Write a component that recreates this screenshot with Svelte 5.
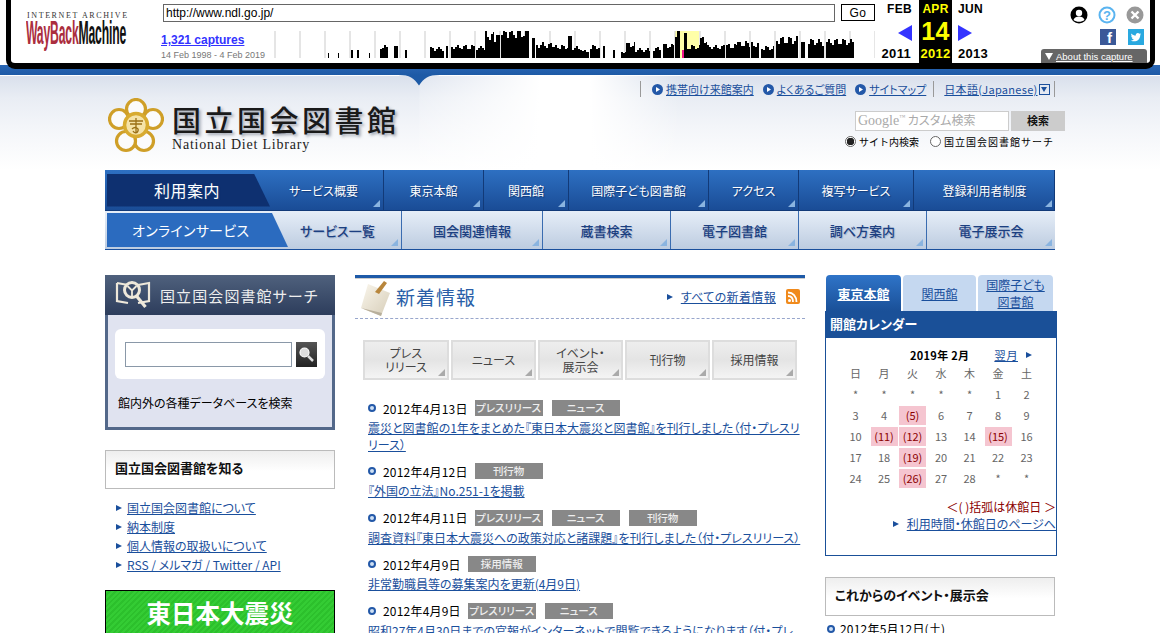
<script>
  // capture histogram, segments are [x, width, height] in page px
  const segs = [
    [328,1,5],[338,1,5],[351,2,8],[357,2,8],[369,1,5],[380,8,11],[394,4,12],[405,2,8],
    [430,14,9],[446,2,12],[451,24,11],[476,9,10],[485,9,22],[494,6,20],[501,28,25],[532,3,20],
    [536,19,13],[555,13,11],[568,4,22],[572,10,10],[582,7,7],[590,10,11],[603,2,12],[613,2,8],
    [621,5,6],[626,9,13],[635,15,8],[653,8,9],[663,11,12],[675,5,25],[684,3,25],[687,13,11],
    [700,7,18],[707,18,11],[726,11,12],[737,13,14],[751,8,13],[761,13,10],[776,22,18],[801,4,16],
    [808,16,16],[826,28,16]
  ];
  const bars = [];
  for (const [x, w, h] of segs) {
    for (let i = 0; i < w; i += 2) {
      const j = w > 4 ? Math.round(Math.sin(x * 1.7 + i * 2.3) * h * 0.22) : 0;
      bars.push({ x: x + i, w: Math.min(2, w - i), h: h + j });
    }
  }
  const years = Array.from({ length: 25 }, (_, i) => 274.5 + i * 25);

  const topLinks = ["携帯向け来館案内", "よくあるご質問", "サイトマップ"];
  const nav1 = ["サービス概要", "東京本館", "関西館", "国際子ども図書館", "アクセス", "複写サービス", "登録利用者制度"];
  const nav2 = ["サービス一覧", "国会関連情報", "蔵書検索", "電子図書館", "調べ方案内", "電子展示会"];
  const knowLinks = ["国立国会図書館について", "納本制度", "個人情報の取扱いについて", "RSS / メルマガ / Twitter / API"];
  const tabs = [["プレス", "リリース"], ["ニュース"], ["イベント・", "展示会"], ["刊行物"], ["採用情報"]];
  const news = [
    { date: "2012年4月13日", tags: ["プレスリリース", "ニュース"], text: "震災と図書館の1年をまとめた『東日本大震災と図書館』を刊行しました（付・プレスリリース）" },
    { date: "2012年4月12日", tags: ["刊行物"], text: "『外国の立法』No.251-1を掲載" },
    { date: "2012年4月11日", tags: ["プレスリリース", "ニュース", "刊行物"], text: "調査資料『東日本大震災への政策対応と諸課題』を刊行しました（付・プレスリリース）" },
    { date: "2012年4月9日", tags: ["採用情報"], text: "非常勤職員等の募集案内を更新(4月9日)" },
    { date: "2012年4月9日", tags: ["プレスリリース", "ニュース"], text: "昭和27年4月30日までの官報がインターネットで閲覧できるようになります（付・プレス" }
  ];
  const weekdays = ["日", "月", "火", "水", "木", "金", "土"];
  const days = ["*","*","*","*","*","1","2","3","4","(5)","6","7","8","9","10","(11)","(12)","13","14","(15)","16","17","18","(19)","20","21","22","23","24","25","(26)","27","28","*","*"];
</script>

<div class="page">
  <div class="toolbar">
    <div class="wb-logo">
      <div class="ia">INTERNET ARCHIVE</div>
      <div class="wbm"><span class="way">WayBack</span><span class="mach">Machine</span></div>
    </div>
    <div class="wb-mid">
      <div class="url-row">
        <input class="url" value="http://www.ndl.go.jp/" />
        <button class="go">Go</button>
      </div>
      <div class="hist-row">
        <div class="caps">
          <a href="#caps">1,321 captures</a>
          <div class="range">14 Feb 1998 - 4 Feb 2019</div>
        </div>
        <svg class="hist" width="601" height="27" viewBox="274 35 601 27">
          <rect x="675" y="35" width="24" height="27" fill="#ffffa8" />
          {#each years as y}
            <rect x={y} y="35" width="1" height="27" fill="#ccc" />
          {/each}
          {#each bars as b}
            <rect x={b.x} y={62 - b.h} width={b.w} height={b.h} fill="#000" />
          {/each}
          <rect x="682" y="54" width="2" height="8" fill="#f0148c" />
        </svg>
      </div>
    </div>
    <div class="wb-cal">
      <div class="c-prev">
        <b>FEB</b>
        <svg width="14" height="16" viewBox="0 0 14 16"><path d="M14 0V16L0 8Z" fill="#3333ff" /></svg>
        <b class="yr">2011</b>
      </div>
      <div class="c-cur">
        <b>APR</b>
        <b class="day">14</b>
        <b class="yr">2012</b>
      </div>
      <div class="c-next">
        <b>JUN</b>
        <svg width="14" height="16" viewBox="0 0 14 16"><path d="M0 0V16L14 8Z" fill="#3333ff" /></svg>
        <b class="yr">2013</b>
      </div>
    </div>
    <div class="wb-icons">
      <div class="ico-row">
        <svg width="18" height="18" viewBox="0 0 18 18"><circle cx="9" cy="9" r="8.5" fill="#000" /><circle cx="9" cy="7" r="3.2" fill="#fff" /><path d="M3.5 14c1-3 3-3.6 5.5-3.6s4.500.6 5.500 3.600c-3 2.400-8 2.400-11 0z" fill="#fff" /></svg>
        <svg width="18" height="18" viewBox="0 0 18 18"><circle cx="9" cy="9" r="7.500" fill="none" stroke="#5ab4f0" stroke-width="2" /><text x="9" y="13.500" text-anchor="middle" class="qm">?</text></svg>
        <svg width="18" height="18" viewBox="0 0 18 18"><circle cx="9" cy="9" r="8.500" fill="#999" /><path d="M5.500 5.500l7 7m0-7l-7 7" stroke="#fff" stroke-width="2.400" /></svg>
      </div>
      <div class="ico-row social">
        <div class="fb">f</div>
        <svg width="16" height="16" viewBox="0 0 16 16"><rect width="16" height="16" fill="#2aa9e0" /><path d="M13 5c-.4.2-.8.3-1.200.4.400-.3.800-.7.900-1.200-.4.200-.9.400-1.300.5a2.100 2.100 0 0 0-3.600 1.900C6 6.500 4.500 5.700 3.500 4.400c-.6 1-.3 2.200.6 2.800-.3 0-.6-.1-.9-.3 0 1 .7 1.900 1.700 2.100-.3.100-.6.100-1 0 .3.800 1 1.400 2 1.500-.9.700-2 1-3.100.9 3.900 2.400 9.500.3 9.500-5.600.3-.2.500-.5.700-.8z" fill="#fff" /></svg>
      </div>
      <div class="about"><span class="tri"></span><a href="#about">About this capture</a></div>
    </div>
  </div>
  <div class="blueband"></div>

  <header class="hdr">
    <svg class="notch" width="60" height="11" viewBox="0 0 60 11"><path d="M0 0C12 0 16 3 21 10.500C26 3 30 0 42 0Z" fill="#1d5aa6" /></svg>
    <div class="brand">
      <svg class="emblem" width="56" height="56" viewBox="0 0 56 56">
        <g fill="#fbfbfb" stroke="#cf9f28" stroke-width="3.200">
          <circle cx="28" cy="11" r="9.500" />
          <circle cx="45" cy="21" r="9.500" />
          <circle cx="36" cy="43" r="9.500" />
          <circle cx="18" cy="43" r="9.500" />
          <circle cx="11" cy="21" r="9.500" />
        </g>
        <circle cx="28" cy="27" r="11.500" fill="#f5e3a8" stroke="#d8ab30" stroke-width="3.500" />
        <path d="M21 23h14M22 26h12M28 20v15M24 31c3-3 7-1 6 2s-4 2-5 0" fill="none" stroke="#9a7016" stroke-width="1.300" />
      </svg>
      <div class="brand-txt">
        <div class="jp">国立国会図書館</div>
        <div class="en">National Diet Library</div>
      </div>
    </div>
    <div class="hdr-right">
      <div class="toplinks">
        {#each topLinks as l}
          <span class="tl">
            <svg width="11" height="11" viewBox="0 0 11 11"><circle cx="5.500" cy="5.500" r="5.500" fill="#2358a8" /><path d="M4 3l4 2.500L4 8z" fill="#fff" /></svg>
            <a href="#top">{l}</a>
          </span>
        {/each}
        <span class="lang"><a href="#lang">日本語(Japanese)</a><span class="dd"></span></span>
      </div>
      <div class="search">
        <div class="s-box"><span class="g">Google<sup>™</sup></span> カスタム検索</div>
        <div class="s-btn">検索</div>
      </div>
      <div class="radios">
        <span class="rd on"></span><span class="rl">サイト内検索</span>
        <span class="rd"></span><span class="rl wide">国立国会図書館サーチ</span>
      </div>
    </div>
  </header>

  <nav class="nav">
    <div class="row1">
      <div class="n1 first">
        <div class="slant">利用案内</div>
        <span class="n1-lab">{nav1[0]}</span>
      </div>
      {#each nav1.slice(1) as n}
        <div class="n1"><span class="n1-lab">{n}</span></div>
      {/each}
    </div>
    <div class="row2">
      <div class="n2 first">
        <div class="slant2">オンラインサービス</div>
        <span class="n2-lab">{nav2[0]}</span>
      </div>
      {#each nav2.slice(1) as n}
        <div class="n2"><span class="n2-lab">{n}</span></div>
      {/each}
    </div>
  </nav>

  <main class="main">
    <aside class="left">
      <section class="ss">
        <div class="ss-head">
          <svg width="36" height="30" viewBox="0 0 36 30">
            <path d="M2 3l11 2M23 5l11-2v18l-11 2M13 23L2 21V3" fill="none" stroke="#eee8da" stroke-width="2.200" />
            <circle cx="17" cy="10" r="7.500" fill="#3a4a68" stroke="#eee8da" stroke-width="3" />
            <path d="M21.500 16l9 11" stroke="#eee8da" stroke-width="3.200" />
            <path d="M12.500 6l4.500 4.500L21.500 6M17 10.500V16" stroke="#eee8da" stroke-width="1.800" fill="none" />
          </svg>
          <span>国立国会図書館サーチ</span>
        </div>
        <div class="ss-body">
          <div class="ss-form">
            <input class="ss-input" />
            <div class="ss-btn">
              <svg width="17" height="17" viewBox="0 0 17 17"><circle cx="6.500" cy="6.500" r="4.500" fill="#ddd" stroke="#fff" stroke-width="1.200" /><path d="M10 10l5 5" stroke="#ddd" stroke-width="2.500" /></svg>
            </div>
          </div>
          <p>館内外の各種データベースを検索</p>
        </div>
      </section>

      <h2 class="boxh know">国立国会図書館を知る</h2>
      <ul class="klinks">
        {#each knowLinks as k}
          <li><span class="arr"></span><a href="#k">{k}</a></li>
        {/each}
      </ul>

      <div class="green">
        <div>東日本大震災</div>
        <div>関連情報</div>
      </div>
    </aside>

    <section class="center">
      <div class="news-head">
        <svg width="32" height="38" viewBox="0 0 32 38">
          <defs><linearGradient id="sheet" x1="0" y1="0" x2="1" y2="1"><stop offset="0" stop-color="#faf6ec" /><stop offset="1" stop-color="#d6cdb8" /></linearGradient></defs>
          <path d="M8 5L30 14 21 37 1 29Z" fill="url(#sheet)" />
          <path d="M1 29L21 37 22 34Z" fill="#b8af9c" />
          <path d="M15 13L24 2l3 2-8 11z" fill="#b8863c" />
        </svg>
        <h2>新着情報</h2>
        <span class="arr all"></span><a class="alllink" href="#all">すべての新着情報</a>
        <svg class="rss" width="14" height="15" viewBox="0 0 14 15">
          <rect width="14" height="15" rx="2" fill="#f08a1c" />
          <circle cx="3.500" cy="11.500" r="1.500" fill="#fff" />
          <path d="M2 7c3 0 5 2 5 6M2 3.500c5 0 8.500 4 8.500 9.500" fill="none" stroke="#fff" stroke-width="1.800" />
        </svg>
      </div>

      <div class="cats">
        {#each tabs as t}
          <div class="cat">
            {#each t as line}<span>{line}</span>{/each}
          </div>
        {/each}
      </div>

      {#each news as n}
        <article class="item">
          <div class="meta">
            <span class="dot"></span>
            <span class="date">{n.date}</span>
            {#each n.tags as t}<span class="tag">{t}</span>{/each}
          </div>
          <a class="nlink" href="#n">{n.text}</a>
        </article>
      {/each}
    </section>

    <aside class="right">
      <div class="rtabs">
        <div class="rtab on"><a href="#t">東京本館</a></div>
        <div class="rtab"><a href="#t">関西館</a></div>
        <div class="rtab small"><a href="#t">国際子ども<br />図書館</a></div>
      </div>
      <div class="cal">
        <div class="cal-head">開館カレンダー</div>
        <div class="cal-cap">
          <b>2019年 2月</b>
          <a href="#m">翌月</a>
          <span class="arr"></span>
        </div>
        <div class="grid">
          {#each weekdays as w}<div class="wd">{w}</div>{/each}
          {#each days as d}
            <div class="d" class:closed={d.startsWith("(")}>{d}</div>
          {/each}
        </div>
        <div class="note">＜( )括弧は休館日 ＞</div>
        <div class="hours"><span class="arr"></span><a href="#h">利用時間・休館日のページへ</a></div>
      </div>
      <h2 class="boxh events">これからのイベント・展示会</h2>
      <div class="ev"><span class="dot"></span>2012年5月12日(土)</div>
    </aside>
  </main>
</div>

<style>
  :global(body) {
    margin: 0;
    background: #fff;
    overflow: hidden;
  }
  .page {
    width: 1160px;
    height: 633px;
    overflow: hidden;
    font-family: "Noto Sans CJK JP", sans-serif;
    font-feature-settings: "palt";
    font-size: 12px;
    color: #000;
  }
  a { color: #1a4f9c; }

  /* wayback bar */
  .toolbar {
    position: relative;
    z-index: 2;
    box-sizing: border-box;
    width: 1149px;
    height: 69px;
    margin-left: 6px;
    margin-bottom: -4px;
    display: flex;
    background: #fff;
    border: solid #000;
    border-width: 0 5px 6px;
    border-radius: 0 0 9px 9px;
    font-family: "Liberation Sans", sans-serif;
    font-feature-settings: normal;
  }
  .blueband {
    height: 10px;
    background: linear-gradient(#2a66b4, #1d5aa6);
  }
  .wb-logo {
    width: 150px;
    flex: none;
    padding: 11px 0 0 15px;
    box-sizing: border-box;
  }
  .ia {
    font: 8px/9px "Liberation Serif", serif;
    letter-spacing: 1.600px;
    color: #333;
    padding-left: 1px;
    white-space: nowrap;
  }
  .wbm {
    display: inline-block;
    font: bold 21px/16px "Liberation Sans", sans-serif;
    transform: scale(0.58, 1.550);
    transform-origin: 0 0;
    white-space: nowrap;
    margin-top: 1px;
    letter-spacing: -0.300px;
  }
  .way { color: #ab2e3e; }
  .mach { color: #111; }
  .wb-mid { width: 714px; flex: none; }
  .url-row {
    display: flex;
    align-items: flex-start;
    padding: 4px 0 0 2px;
    height: 31px;
    box-sizing: border-box;
  }
  .url {
    width: 673px;
    height: 18px;
    box-sizing: border-box;
    border: 1px solid #666;
    padding: 0 2px;
    font: 12px "Liberation Sans", sans-serif;
    outline: none;
  }
  .go {
    width: 34px;
    height: 17px;
    margin-left: 6px;
    padding: 0;
    border: 1px solid #000;
    background: #fff;
    font: 12px "Liberation Sans", sans-serif;
    letter-spacing: 0.500px;
  }
  .hist-row { display: flex; }
  .caps { width: 113px; flex: none; }
  .caps a {
    display: block;
    font: bold 12px/14px "Liberation Sans", sans-serif;
    color: #3333ff;
    margin-top: 2px;
  }
  .range {
    font: 9px/12px "Liberation Sans", sans-serif;
    color: #777;
    margin-top: 2px;
    white-space: nowrap;
  }
  .hist { display: block; flex: none; }
  .wb-cal {
    flex: none;
    display: grid;
    grid-template-columns: 44px 33px 40px;
    height: 63px;
  }
  .wb-cal b { font-size: 12px; line-height: 14px; letter-spacing: 0.300px; }
  .c-prev, .c-cur, .c-next {
    display: flex;
    flex-direction: column;
    align-items: center;
    padding-top: 2px;
    box-sizing: border-box;
  }
  .c-prev { align-items: flex-end; padding-right: 7px; }
  .c-next { align-items: flex-start; padding-left: 6px; }
  .c-prev svg, .c-next svg { margin: 9px 0 6px; }
  .c-prev .yr { margin-right: 1px; }
  .c-cur { background: #000; color: #ff0; }
  .c-cur .day { font-size: 25px; line-height: 31px; margin-bottom: 0; }
  .yr { font-size: 13px !important; }
  .wb-icons {
    flex: 1;
    position: relative;
    display: flex;
    flex-direction: column;
    align-items: flex-end;
    padding: 6px 6px 0 0;
    box-sizing: border-box;
  }
  .ico-row { display: flex; gap: 10px; }
  .qm { font: bold 13px "Liberation Sans", sans-serif; fill: #5ab4f0; }
  .social { margin-top: 5px; gap: 12px; padding-left: 0; }
  .fb {
    width: 16px;
    height: 16px;
    background: #3b5998;
    color: #fff;
    font: bold 15px/18px "Liberation Sans", sans-serif;
    text-align: right;
    padding-right: 4px;
    box-sizing: border-box;
    overflow: hidden;
  }
  .about {
    position: absolute;
    right: 3px;
    bottom: 0;
    width: 106px;
    height: 14px;
    box-sizing: border-box;
    background: #666;
    border-radius: 3px 3px 0 0;
    color: #fff;
    display: flex;
    align-items: center;
    padding-left: 4px;
    white-space: nowrap;
  }
  .about a { color: #fff; font-size: 9.500px; margin-left: 3px; }
  .tri {
    width: 0;
    height: 0;
    border: 4.500px solid transparent;
    border-top: 7px solid #fff;
    border-bottom: 0;
  }

  /* site header */
  .hdr {
    position: relative;
    height: 95px;
    display: flex;
    justify-content: space-between;
    border-top: 1px solid #fff;
    box-sizing: border-box;
    background:
      linear-gradient(90deg, rgba(255, 255, 255, 0) 0, rgba(255, 255, 255, 0) 419px, rgba(255, 255, 255, 0.200) 420px, #fff 540px, #fff 590px, rgba(255, 255, 255, 0) 680px),
      linear-gradient(#d9e0ec 0, #e9edf4 22px, #f3f5f9 50px, #fff 94px);
  }
  .notch { position: absolute; left: 398px; top: -1px; }
  .brand {
    display: flex;
    gap: 8px;
    padding: 22px 0 0 108px;
  }
  .brand-txt { padding-top: 6px; }
  .jp {
    font-size: 29px;
    line-height: 30px;
    font-weight: 500;
    color: #1a1a1a;
    letter-spacing: 3.500px;
    font-feature-settings: normal;
    text-shadow: 2px 2px 3px rgba(80, 90, 110, 0.500);
  }
  .en {
    font: 14px/16px "Liberation Serif", serif;
    letter-spacing: 0.800px;
    color: #222;
    margin-top: 3px;
    white-space: nowrap;
  }
  .hdr-right { position: relative; width: 526px; padding-top: 5px; box-sizing: border-box; }
  .toplinks {
    display: flex;
    align-items: center;
    height: 16px;
    margin-left: 6px;
    width: 415px;
    box-sizing: border-box;
    border-left: 1px solid #999;
    border-right: 1px solid #999;
    padding-left: 11px;
    white-space: nowrap;
  }
  .tl { display: inline-flex; align-items: center; gap: 3px; margin-right: 9px; font-size: 11px; }
  .lang { display: inline-flex; align-items: center; margin-left: -2px; padding-left: 10px; border-left: 1px solid #999; height: 16px; font-size: 11px; letter-spacing: 0.300px; }
  .dd {
    width: 11px;
    height: 11px;
    box-sizing: border-box;
    border: 1px solid #1a4f9c;
    position: relative;
    margin-left: 1px;
  }
  .dd::after {
    content: "";
    position: absolute;
    left: 1.500px;
    top: 2px;
    border: 3px solid transparent;
    border-top: 5px solid #1a4f9c;
    border-bottom: 0;
  }
  .search { display: flex; gap: 2px; margin: 14px 0 0 221px; }
  .s-box {
    width: 154px;
    height: 20px;
    box-sizing: border-box;
    border: 1px solid #ccc;
    background: #fff;
    font-size: 12px;
    line-height: 15px;
    color: #aaa;
    padding-left: 2px;
    white-space: nowrap;
  }
  .g { font-family: "Liberation Serif", serif; font-size: 14px; color: #aaa; }
  .g sup { font-size: 6px; line-height: 0; }
  .s-btn {
    width: 54px;
    height: 20px;
    background: #ccc;
    text-align: center;
    font-size: 11px;
    font-weight: 700;
    line-height: 19px;
    color: #111;
  }
  .radios {
    display: flex;
    align-items: center;
    margin: 0 0 0 211px;
    height: 20px;
    white-space: nowrap;
  }
  .rd {
    width: 11px;
    height: 11px;
    box-sizing: border-box;
    border: 1px solid #666;
    border-radius: 50%;
    background: #fff;
    flex: none;
  }
  .rd.on { background: radial-gradient(circle, #222 3.500px, #fff 4px); }
  .rl { font-size: 10px; font-feature-settings: normal; margin: 0 11px 0 3px; }
  .rl.wide { letter-spacing: 1px; }

  /* nav */
  .nav { margin: 0 105px; width: 950px; }
  .row1, .row2 { display: grid; height: 40px; }
  .row1 {
    grid-template-columns: 279px 100px 85px 140px 90px 115px 141px;
    background: linear-gradient(#2e70c2, #1a4c96);
    border-right: 1px solid #123a78;
    box-sizing: border-box;
  }
  .row2 {
    grid-template-columns: 297px 141px 128px 128px 128px 128px;
    background: linear-gradient(#e6eef8, #bdcce0);
    border-top: 1px solid #123a78;
    border-bottom: 1px solid #1a4f9c;
    box-sizing: border-box;
  }
  .n1, .n2 {
    position: relative;
    display: flex;
    align-items: center;
    justify-content: center;
    box-sizing: border-box;
  }
  .n1 { border-right: 1px solid #123a78; color: #fff; font-size: 12px; text-shadow: 1px 1px 1px #123a78; }
  .n1:last-child { border-right: 0; }
  .n2 { border-right: 1px solid #3a6cb0; color: #1c3f80; font-size: 13px; font-weight: 500; text-shadow: 1px 1px 1px #9fb2cf; }
  .n2:last-child { border-right: 0; }
  .n1::after, .n2::after {
    content: "";
    position: absolute;
    right: 3px;
    bottom: 3px;
    width: 0;
    height: 0;
    border-style: solid;
    border-width: 0 0 7px 7px;
    border-color: transparent transparent #8ab4e0;
  }
  .n1.first, .n2.first { justify-content: flex-start; }
  .slant {
    width: 163px;
    height: 33px;
    margin: 0 0 0 2px;
    padding-left: 47px;
    box-sizing: border-box;
    background: #0e3070;
    color: #fff;
    font-size: 16px;
    line-height: 33px;
    letter-spacing: 0.500px;
    clip-path: polygon(0 0, 147px 0, 100% 100%, 0 100%);
    flex: none;
  }
  .n1-lab { white-space: nowrap; }
  .first .n1-lab { margin-left: 19px; }
  .slant2 {
    width: 181px;
    height: 34px;
    margin-left: 2px;
    padding-left: 25px;
    box-sizing: border-box;
    background: #2b6bbf;
    color: #fff;
    font-size: 14px;
    line-height: 34px;
    clip-path: polygon(0 0, 165px 0, 100% 100%, 0 100%);
    flex: none;
    text-shadow: none;
    font-weight: 400;
    letter-spacing: 0.300px;
  }
  .first .n2-lab { margin-left: 12px; }

  /* columns */
  .main {
    display: flex;
    gap: 20px;
    padding: 25px 0 0 105px;
  }
  .left { width: 230px; flex: none; }
  .center { width: 450px; flex: none; }
  .right { width: 232px; flex: none; }

  .ss { border: solid #53688a; border-width: 0 3px 3px; background: #e0e3f0; }
  .ss-head {
    height: 40px;
    margin: 0 -3px;
    display: flex;
    align-items: center;
    gap: 9px;
    padding-left: 10px;
    background: linear-gradient(#4f617d, #2d3d5c);
    color: #eee;
    font-size: 15px;
    letter-spacing: 1.100px;
    white-space: nowrap;
  }
  .ss-body { height: 112px; padding: 14px 7px 0; box-sizing: border-box; }
  .ss-form {
    display: flex;
    gap: 4px;
    align-items: center;
    height: 50px;
    background: #fff;
    border-radius: 6px;
    padding-left: 10px;
  }
  .ss-input {
    width: 167px;
    height: 25px;
    box-sizing: border-box;
    border: 1px solid #8a98a8;
    outline: none;
  }
  .ss-btn {
    width: 21px;
    height: 25px;
    background: linear-gradient(#555, #222);
    display: flex;
    align-items: center;
    justify-content: center;
  }
  .ss-body p { margin: 15px 0 0 3px; font-size: 12px; line-height: 18px; white-space: nowrap; }

  .boxh {
    margin: 0;
    height: 39px;
    box-sizing: border-box;
    border: 1px solid #bbb;
    padding-left: 9px;
    background: linear-gradient(#eee, #fff 55%);
    font-size: 13px;
    font-weight: 700;
    line-height: 34px;
    color: #111;
  }
  .know { margin-top: 20px; }
  .klinks { list-style: none; margin: 9px 0 0; padding: 0 0 0 11px; }
  .klinks li { display: flex; align-items: center; height: 19px; font-size: 12px; }
  .arr {
    display: inline-block;
    flex: none;
    width: 0;
    height: 0;
    border-style: solid;
    border-width: 3.500px 0 3.500px 6px;
    border-color: transparent transparent transparent #1a4f9c;
  }
  .klinks .arr { margin-right: 5px; }
  .green {
    box-sizing: border-box;
    height: 90px;
    margin-top: 16px;
    border: 1px solid #000;
    background: repeating-linear-gradient(135deg, #34cc34 0 2px, #2cc02c 2px 4px);
    color: #fff;
    font-size: 24.500px;
    font-weight: 700;
    line-height: 34px;
    text-align: center;
    font-feature-settings: normal;
    padding-top: 5px;
  }

  .news-head {
    display: flex;
    align-items: center;
    height: 44px;
    box-sizing: border-box;
    border-top: 3px solid #1e5aa8;
    border-bottom: 1px dashed #98a6cc;
    padding: 0 0 3px 5px;
    box-shadow: inset 0 1px 0 #ccc;
  }
  .news-head > svg:first-child { margin-top: 3px; }
  .news-head h2 {
    margin: 0 0 0 4px;
    font-size: 19px;
    font-weight: 400;
    letter-spacing: 1px;
    color: #2a5fa8;
    flex: 1;
    font-feature-settings: normal;
  }
  .arr.all { margin-right: 8px; }
  .alllink { font-size: 12px; letter-spacing: 0.350px; }
  .rss { margin: 0 5px 0 10px; }

  .cats { display: flex; gap: 2px; padding: 21px 0 0 8px; }
  .cat {
    position: relative;
    width: 85px;
    height: 40px;
    box-sizing: border-box;
    border: 2px solid #ddd;
    background: linear-gradient(#eee, #e4e4e4 50%, #f4f4f4);
    display: flex;
    flex-direction: column;
    align-items: center;
    justify-content: center;
    font-size: 12px;
    line-height: 14px;
    color: #444;
  }
  .cat:first-child { width: 86px; }
  .cat::after {
    content: "";
    position: absolute;
    right: 2px;
    bottom: 2px;
    border-style: solid;
    border-width: 0 0 7px 7px;
    border-color: transparent transparent #aaa;
  }

  .item { margin: 0 0 10px 13px; }
  .cats + .item { margin-top: 20px; }
  .meta { display: flex; align-items: center; height: 16px; }
  .dot {
    flex: none;
    width: 8px;
    height: 8px;
    box-sizing: border-box;
    border: 2px solid #2358a8;
    border-radius: 50%;
    background: #cfe0f4;
  }
  .date { margin: 0 7px 0 7px; font-size: 12px; letter-spacing: 0.200px; min-width: 70px; }
  .tag {
    width: 68px;
    height: 16px;
    margin-right: 9px;
    background: #888;
    color: #eee;
    font-size: 10.500px;
    line-height: 16px;
    text-align: center;
    font-weight: 500;
    white-space: nowrap;
  }
  .nlink {
    display: block;
    margin: 4px 0 0 0;
    width: 434px;
    font-size: 12px;
    line-height: 16.500px;
  }

  .rtabs { display: flex; gap: 2px; height: 36px; padding-left: 1px; }
  .rtab {
    width: 73px;
    background: #c5d8f0;
    border-radius: 4px 4px 0 0;
    display: flex;
    align-items: center;
    justify-content: center;
    text-align: center;
    font-size: 12px;
    line-height: 17px;
  }
  .rtab.small { width: 75px; }
  .rtab.on { width: 75px; background: linear-gradient(#2f74c8, #1a5098); font-size: 13px; }
  .rtab.on a { color: #fff; font-weight: 700; }
  .cal {
    height: 245px;
    box-sizing: border-box;
    border: 1px solid #1a5098;
  }
  .cal-head {
    height: 26px;
    background: #1a5098;
    color: #fff;
    font-size: 13px;
    font-weight: 700;
    line-height: 24px;
    padding-left: 4px;
  }
  .cal-cap {
    display: flex;
    align-items: center;
    height: 20px;
    margin-top: 7px;
    padding-left: 84px;
    white-space: nowrap;
    font-size: 11px;
    letter-spacing: 0.300px;
  }
  .cal-cap a { margin: 0 8px 0 25px; font-size: 11.500px; }
  .grid {
    display: grid;
    grid-template-columns: repeat(7, 27px);
    column-gap: 1.500px;
    grid-auto-rows: 19px;
    row-gap: 2px;
    margin: -1px 0 0 16px;
  }
  .wd, .d {
    text-align: center;
    font-size: 11px;
    line-height: 18px;
    color: #666;
  }
  .d.closed { background: #f5c5d0; color: #8b0000; }
  .note {
    margin-top: 10px;
    text-align: right;
    color: #8b0000;
    font-size: 12px;
    line-height: 17px;
    white-space: nowrap;
  }
  .hours {
    display: flex;
    align-items: center;
    justify-content: flex-end;
    gap: 8px;
    white-space: nowrap;
    font-size: 12px;
    line-height: 17px;
  }
  .events { width: 230px; margin-top: 21px; }
  .ev { display: flex; align-items: center; gap: 5px; margin-top: 4px; font-size: 12px; letter-spacing: 0.200px; }
  .ev .dot { margin-left: 2px; }
</style>
